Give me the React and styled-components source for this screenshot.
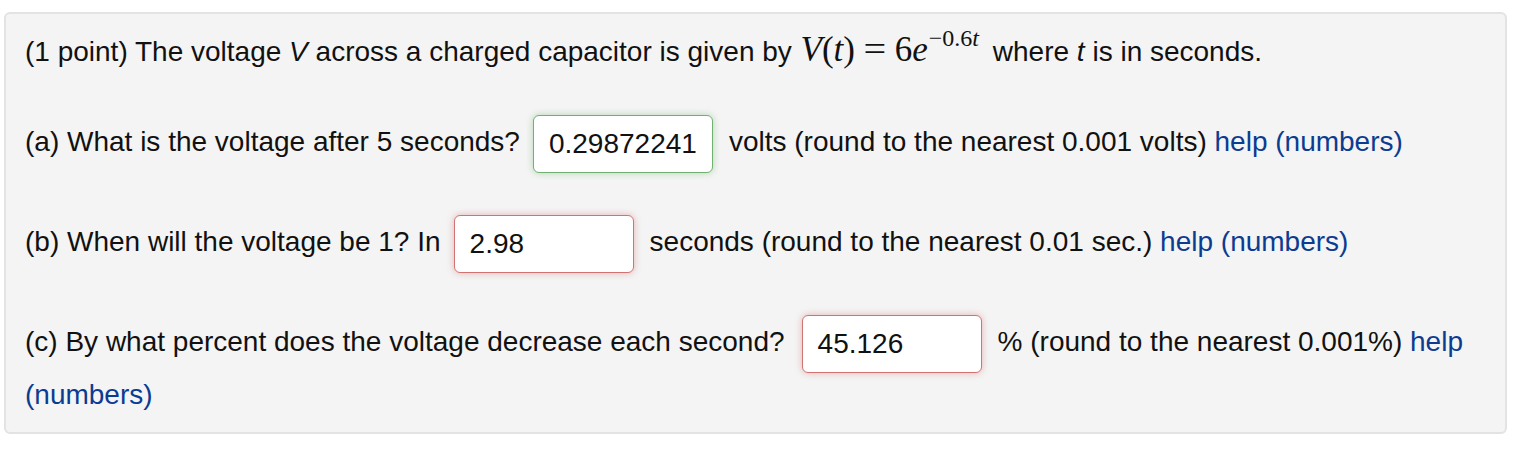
import styled, { createGlobalStyle } from 'styled-components';

const Global = createGlobalStyle`
    body {
        margin: 0;
        background: #ffffff;
        font-family: "Liberation Sans", Arial, sans-serif;
        color: #111;
    }
`
const Panel = styled.div `
    margin: 12px 0 0 4px;
    width: 1503px;
    box-sizing: border-box;
    background-color: #f4f4f4;
    border: 2px solid #e3e3e3;
    border-radius: 6px;
    padding: 16px 20px 17px 19px;
    font-size: 28px;
    line-height: 40px;
`
const Para = styled.p `
    margin: 0 0 ${props => props.last ? '0' : props.first ? '41px' : '38px'};
`
const Var = styled.i `
    font-style: italic;
`
const Math = styled.span `
    font-family: "Liberation Serif", "Times New Roman", serif;
    font-size: 35px;
    margin: 0 6px 0 0;
    white-space: nowrap;
`
const MI = styled.i `
    font-style: italic;
`
const Op = styled.span `
    margin: 0 10px;
    display: inline-block;
    transform: scaleX(1.15);
`
const Sup = styled.sup `
    font-size: 24px;
    vertical-align: 15px;
    line-height: 0;
    margin-left: 1px;
`
const Answer = styled.span `
    display: inline-block;
    box-sizing: border-box;
    width: 180px;
    height: 58px;
    margin: 2px 16px 2px ${props => props.tight ? '13px' : '17px'};
    padding: 0 15px;
    vertical-align: middle;
    line-height: 56px;
    background: #fff;
    border: 1.5px solid ${props => props.ok ? '#72b072' : '#d27373'};
    border-radius: 6px;
    box-shadow: 0 0 7px ${props => props.ok ? 'rgba(100,175,100,0.45)' : 'rgba(210,100,100,0.45)'};
    color: #111;
`
const Help = styled.a `
    color: #0c3c91;
    text-decoration: none;
`

const App = () => {
    return (
        <>
        <Global />
        <Panel>
            <Para first>
                (1 point) The voltage <Var>V</Var> across a charged capacitor is given by
                <Math> <MI>V</MI>(<MI>t</MI>)<Op>=</Op>6<MI>e</MI><Sup>−0.6<MI>t</MI></Sup></Math>
                {' '}where <Var>t</Var> is in seconds.
            </Para>
            <Para>
                (a) What is the voltage after 5 seconds?
                <Answer ok tight>0.29872241</Answer>
                volts (round to the nearest 0.001 volts) <Help href="#">help (numbers)</Help>
            </Para>
            <Para>
                (b) When will the voltage be 1? In
                <Answer tight>2.98</Answer>
                seconds (round to the nearest 0.01 sec.) <Help href="#">help (numbers)</Help>
            </Para>
            <Para last>
                (c) By what percent does the voltage decrease each second?
                <Answer>45.126</Answer>
                % (round to the nearest 0.001%) <Help href="#">help (numbers)</Help>
            </Para>
        </Panel>
        </>
    )
}

export default App;
